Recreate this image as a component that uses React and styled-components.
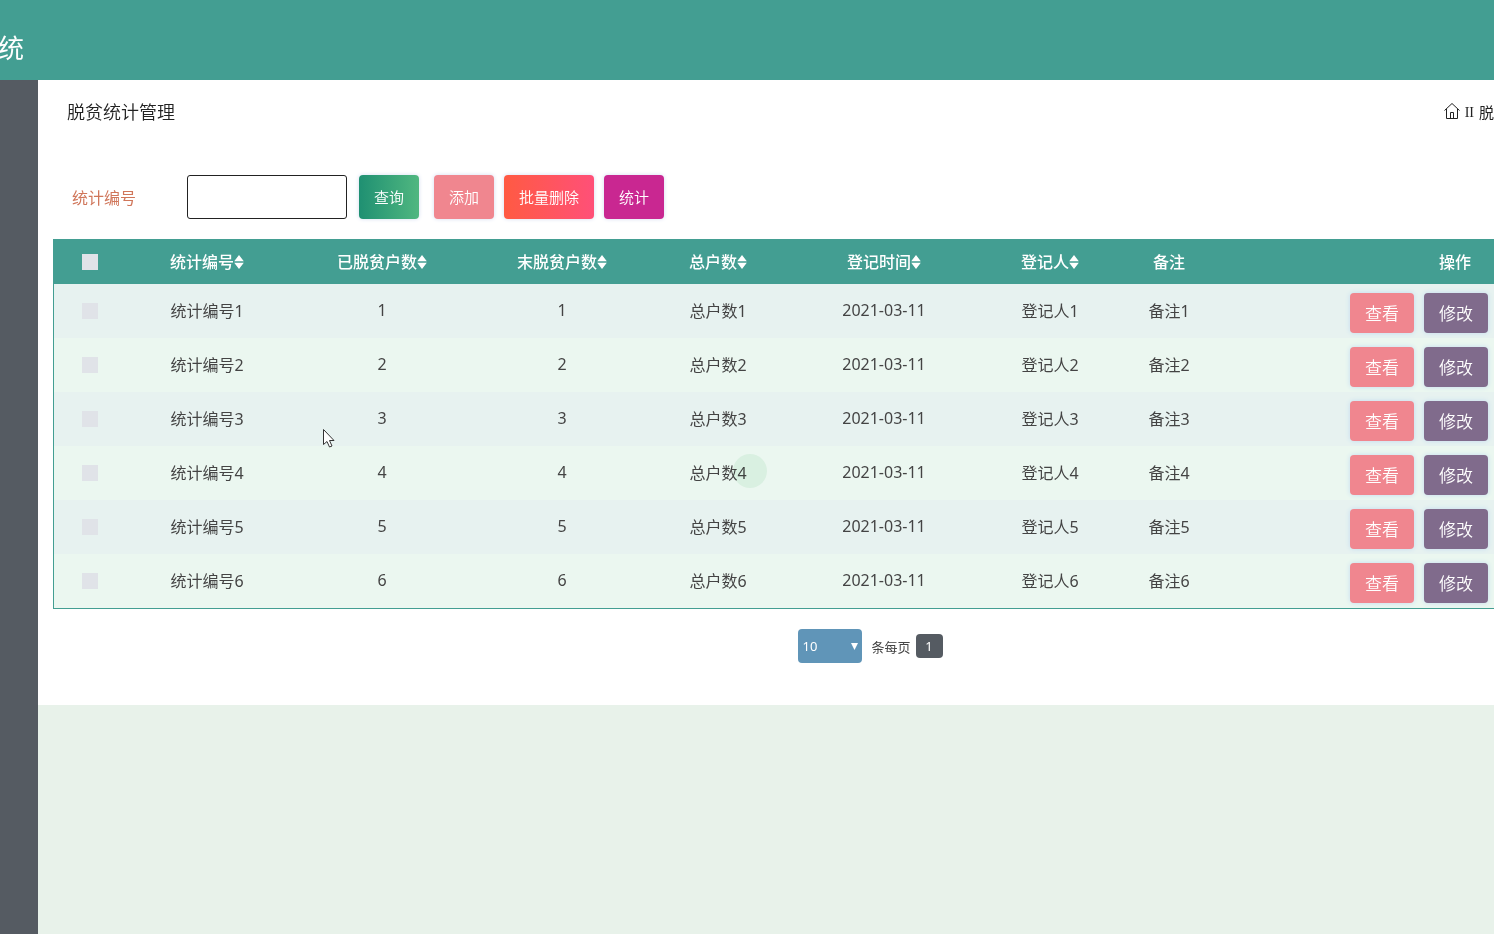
import React from "react";
import styled, { createGlobalStyle } from "styled-components";

const GlobalStyle = createGlobalStyle`
  * {
    box-sizing: border-box;
  }
  body {
    margin: 0;
    background: #e8f2ea;
    color: #444;
    font-family: "Noto Sans", "Noto Sans CJK SC", sans-serif;
    font-size: 16px;
    overflow: hidden;
  }
  button, input, select {
    font: inherit;
  }
`;
const Page = styled.div`
  display: flex;
  flex-direction: column;
  min-height: 100vh;
`;
const TopBar = styled.header`
  display: flex;
  align-items: center;
  height: 80px;
  padding-top: 16px;
  background: #439e92;
  color: #fff;
  overflow: hidden;
`;
const SystemName = styled.div`
  margin-left: -2px;
  font-size: 26px;
  line-height: 32px;
`;
const Body = styled.div`
  display: flex;
  flex: 1;
`;
const SideBar = styled.aside`
  flex: 0 0 38px;
  background: #555b62;
`;
const Content = styled.main`
  flex: 1;
  min-width: 0;
`;
const Card = styled.section`
  background: #fff;
  padding: 16px 0 42px;
  overflow: hidden;
`;
const TitleRow = styled.div`
  display: flex;
  justify-content: space-between;
  align-items: center;
  height: 32px;
  padding-left: 29px;
`;
const Title = styled.h1`
  margin: 0;
  font-size: 18px;
  font-weight: 350;
  line-height: 32px;
  color: #222;
`;
const Breadcrumb = styled.nav`
  display: flex;
  align-items: center;
  gap: 5px;
  padding-bottom: 2px;
  font-size: 15px;
  color: #222;
`;
const HomeLink = styled.a`
  display: flex;
  color: inherit;
`;
const Divider = styled.span`
  font-family: "Liberation Serif", serif;
  font-size: 14px;
  line-height: 14px;
  padding-top: 3px;
`;
const SearchForm = styled.form`
  display: flex;
  align-items: center;
  margin: 47px 0 20px 34px;
`;
const SearchLabel = styled.label`
  width: 115px;
  padding-bottom: 1px;
  color: #d0765a;
`;
const SearchInput = styled.input`
  width: 160px;
  height: 44px;
  margin-right: 12px;
  padding: 0 12px;
  border: 1px solid #222;
  border-radius: 3px;
  background: #fff;
  outline: none;
`;
const ToolButton = styled.button`
  height: 44px;
  margin-right: ${props => props.$gap || "10px"};
  padding: 0 15px 2px;
  border: 0;
  border-radius: 4px;
  background: ${props => props.$bg};
  box-shadow: 0 0 4px #d4dcf0;
  color: #fff;
  font-size: 15px;
  font-weight: 350;
  cursor: pointer;
`;
const TableArea = styled.div`
  min-width: 1637px;
  margin-left: 15px;
`;
const Table = styled.table`
  width: 1637px;
  min-width: 100%;
  table-layout: fixed;
  border-collapse: separate;
  border-spacing: 0;
  border: solid #439e92;
  border-width: 0 1px 1px;
`;
const HeadCell = styled.th`
  height: 45px;
  padding: 0 0 2px;
  background: #439e92;
  color: #fff;
  font-weight: 500;
  text-align: center;
`;
const SortButton = styled.button`
  display: inline-flex;
  align-items: center;
  padding: 0;
  border: 0;
  background: none;
  color: inherit;
  cursor: pointer;
`;
const SortSvg = styled.svg`
  margin-top: 2px;
`;
const Row = styled.tr`
  background: #e7f2f0;
  &:nth-child(even) {
    background: #ebf7f0;
  }
`;
const Cell = styled.td`
  height: 54px;
  padding: 0 0 2px;
  text-align: center;
`;
const CheckBox = styled.input`
  appearance: none;
  display: block;
  width: 16px;
  height: 16px;
  margin: 2px auto 0;
  background: #e0e3e8;
`;
const Actions = styled.div`
  display: flex;
  gap: 10px;
  padding: 6px 0 0 131px;
`;
const ActionButton = styled.button`
  width: 64px;
  height: 40px;
  padding: 0 0 2px;
  border: 0;
  border-radius: 4px;
  background: ${props => props.$bg};
  box-shadow: 0 0 5px #c3dcf0;
  color: #fff;
  font-size: 17px;
  font-weight: 350;
  cursor: pointer;
`;
const Pager = styled.div`
  display: flex;
  justify-content: center;
  align-items: center;
  margin-top: 20px;
  padding-right: 2px;
  font-size: 13px;
`;
const SelectBox = styled.div`
  display: grid;
  align-items: center;
  width: 64px;
  height: 34px;
  margin-right: 9px;
  border-radius: 4px;
  background: #6095b8;
  color: #fff;
  > * {
    grid-area: 1 / 1;
  }
  > svg {
    justify-self: end;
    margin-right: 4px;
    pointer-events: none;
  }
`;
const SizeSelect = styled.select`
  appearance: none;
  width: 100%;
  height: 34px;
  padding: 0 4px;
  border: 0;
  background: none;
  color: #fff;
  outline: none;
`;
const PageButton = styled.button`
  width: 27px;
  height: 24px;
  margin-left: 5px;
  padding: 0;
  border: 0;
  border-radius: 4px;
  background: #555b62;
  color: #fff;
`;
const ClickHalo = styled.div`
  position: absolute;
  left: 733px;
  top: 454px;
  width: 34px;
  height: 34px;
  border-radius: 50%;
  background: rgba(160, 220, 180, 0.2);
  mix-blend-mode: multiply;
  pointer-events: none;
`;
const Pointer = styled.svg`
  position: absolute;
  left: 322px;
  top: 428px;
  pointer-events: none;
`;

const columns = [
  { title: "统计编号", width: 164, sort: true },
  { title: "已脱贫户数", width: 186, sort: true },
  { title: "末脱贫户数", width: 174, sort: true },
  { title: "总户数", width: 138, sort: true },
  { title: "登记时间", width: 194, sort: true },
  { title: "登记人", width: 138, sort: true },
  { title: "备注", width: 100 },
  { title: "操作", width: 472 }
];
const rows = [1, 2, 3, 4, 5, 6];

const SortIcon = () => (
  <SortSvg width="10" height="14" viewBox="0 0 10 14" fill="currentColor">
    <path d="M5 0 9.8 6.2H.2zM.2 7.8h9.6L5 14z" />
  </SortSvg>
);

const HomeIcon = () => (
  <svg
    width="16"
    height="18"
    viewBox="0 0 16 18"
    fill="none"
    stroke="currentColor"
  >
    <path d="M.5 8.5 8 1.5 15.5 8.5M2.5 7v9.5h11V7M6.5 16.5v-6h3v6" />
  </svg>
);

class App extends React.Component {
  constructor(props) {
    super(props);
    this.state = { keyword: "", checked: [] };
  }
  toggleRow = id => {
    const { checked } = this.state;
    this.setState({
      checked: checked.includes(id)
        ? checked.filter(item => item !== id)
        : [...checked, id]
    });
  };
  toggleAll = () => {
    this.setState({
      checked: this.state.checked.length === rows.length ? [] : rows
    });
  };
  render() {
    const { keyword, checked } = this.state;
    return (
      <Page>
        <GlobalStyle />
        <TopBar>
          <SystemName>统</SystemName>
        </TopBar>
        <Body>
          <SideBar />
          <Content>
            <Card>
              <TitleRow>
                <Title>脱贫统计管理</Title>
                <Breadcrumb>
                  <HomeLink href="#" aria-label="首页">
                    <HomeIcon />
                  </HomeLink>
                  <Divider>II</Divider>
                  <span>脱</span>
                </Breadcrumb>
              </TitleRow>
              <SearchForm onSubmit={e => e.preventDefault()}>
                <SearchLabel htmlFor="keyword">统计编号</SearchLabel>
                <SearchInput
                  id="keyword"
                  value={keyword}
                  onChange={e => this.setState({ keyword: e.target.value })}
                />
                <ToolButton
                  type="submit"
                  $gap="15px"
                  $bg="linear-gradient(90deg, #1f9072, #50b780)"
                >
                  查询
                </ToolButton>
                <ToolButton type="button" $bg="#f0868f">
                  添加
                </ToolButton>
                <ToolButton
                  type="button"
                  $bg="linear-gradient(90deg, #ff5a43, #ff5078)"
                >
                  批量删除
                </ToolButton>
                <ToolButton type="button" $bg="#c92791">
                  统计
                </ToolButton>
              </SearchForm>
              <TableArea>
                <Table>
                  <colgroup>
                    <col width="71" />
                    {columns.map(col => (
                      <col key={col.title} width={col.width} />
                    ))}
                  </colgroup>
                  <thead>
                    <tr>
                      <HeadCell>
                        <CheckBox
                          type="checkbox"
                          aria-label="全选"
                          checked={checked.length === rows.length}
                          onChange={this.toggleAll}
                        />
                      </HeadCell>
                      {columns.map(col => (
                        <HeadCell key={col.title}>
                          {col.sort ? (
                            <SortButton type="button">
                              {col.title}
                              <SortIcon />
                            </SortButton>
                          ) : (
                            col.title
                          )}
                        </HeadCell>
                      ))}
                    </tr>
                  </thead>
                  <tbody>
                    {rows.map(id => (
                      <Row key={id}>
                        <Cell>
                          <CheckBox
                            type="checkbox"
                            aria-label={`统计编号${id}`}
                            checked={checked.includes(id)}
                            onChange={() => this.toggleRow(id)}
                          />
                        </Cell>
                        <Cell>统计编号{id}</Cell>
                        <Cell>{id}</Cell>
                        <Cell>{id}</Cell>
                        <Cell>总户数{id}</Cell>
                        <Cell>2021-03-11</Cell>
                        <Cell>登记人{id}</Cell>
                        <Cell>备注{id}</Cell>
                        <Cell>
                          <Actions>
                            <ActionButton type="button" $bg="#f0868f">
                              查看
                            </ActionButton>
                            <ActionButton type="button" $bg="#806b8c">
                              修改
                            </ActionButton>
                          </Actions>
                        </Cell>
                      </Row>
                    ))}
                  </tbody>
                </Table>
                <Pager>
                  <SelectBox>
                    <SizeSelect id="pageSize" defaultValue="10">
                      <option>10</option>
                      <option>20</option>
                      <option>50</option>
                    </SizeSelect>
                    <svg width="7" height="7" fill="currentColor">
                      <path d="M0 0h7L3.5 7z" />
                    </svg>
                  </SelectBox>
                  <label htmlFor="pageSize">条每页</label>
                  <PageButton type="button">1</PageButton>
                </Pager>
              </TableArea>
            </Card>
          </Content>
        </Body>
        <ClickHalo />
        <Pointer width="14" height="21" viewBox="0 0 14 21">
          <path
            d="M1.5 1.5v15l3.5-3 2.5 5.5 2.5-1-2.5-5.5h4.5z"
            fill="#fff"
            stroke="#333"
          />
        </Pointer>
      </Page>
    );
  }
}
export default App;
